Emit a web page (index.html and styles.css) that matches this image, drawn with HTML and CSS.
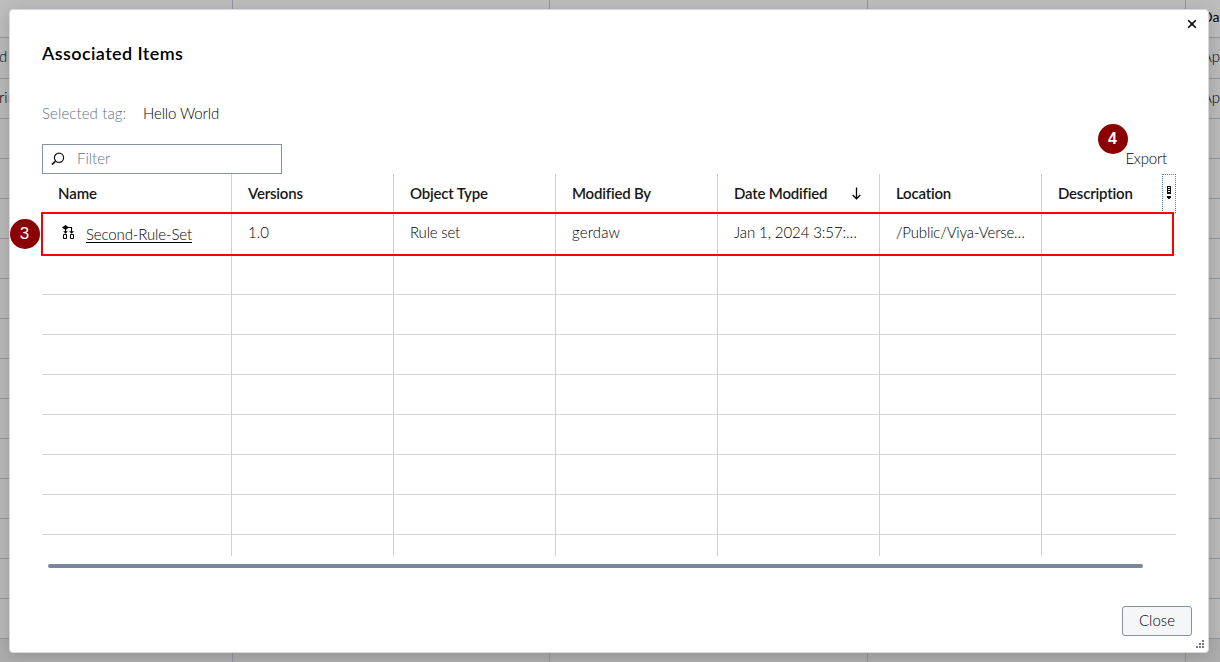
FILE: index.html
```html
<!DOCTYPE html>
<html lang="en">
<head>
<meta charset="utf-8">
<title>Associated Items</title>
<link rel="stylesheet" href="styles.css">
</head>
<body>
<div class="page">
  <div class="back-head"><span></span><span></span><span></span><span></span><b>Date</b></div>
  <div class="back-row first"><span class="l">d</span><span class="r">Apr</span></div>
  <div class="back-row"><span class="l">ring</span><span class="r">Apr</span></div>
  <div class="back-row"></div><div class="back-row"></div><div class="back-row"></div><div class="back-row"></div><div class="back-row"></div><div class="back-row"></div><div class="back-row"></div><div class="back-row"></div><div class="back-row"></div><div class="back-row"></div><div class="back-row"></div><div class="back-row"></div><div class="back-row"></div>
  <div class="back-foot"><span></span><span></span><span></span><span></span></div>
</div>
<section class="dialog">
  <svg class="x" width="10" height="10" viewBox="0 0 10 10"><path d="M1.2 1.2 8.8 8.8M8.8 1.2 1.2 8.8" stroke="#000" stroke-width="1.6"/></svg>
  <h1><span>Associated Items</span></h1>
  <div class="tag"><span class="label">Selected tag:</span><span class="value">Hello World</span></div>
  <div class="tools">
    <div class="filter">
      <svg width="14" height="14" viewBox="0 0 14 14"><circle cx="8" cy="5.8" r="4.6" fill="none" stroke="#111" stroke-width="1.2"/><path d="M4.6 9 1 12.6" stroke="#111" stroke-width="1.7"/></svg>
      <span>Filter</span>
    </div>
    <span class="export">Export</span>
  </div>
  <div class="table">
    <div class="row head">
      <div><span class="name">Name</span></div><div><span>Versions</span></div><div><span>Object Type</span></div><div><span>Modified By</span></div>
      <div><span>Date Modified</span><svg class="sort" width="9" height="13" viewBox="0 0 9 13"><path d="M4.5.5V11.500M.7 8 4.500 11.800 8.300 8" fill="none" stroke="#000" stroke-width="1.300"/></svg></div>
      <div><span>Location</span></div>
      <div><span>Description</span><span class="menu"><svg width="5" height="14" viewBox="0 0 5 14" shape-rendering="crispEdges"><path d="M0 0h4v8H0zM1 1v1h2V1zM1 3v1h2V3zM1 5v1h2V5z" fill="#111" fill-rule="evenodd"/><path d="M0 10h4v2H3v1H1v-1H0z" fill="#111"/></svg></span></div>
    </div>
    <div class="row data">
      <div><svg class="rule" width="13" height="14" viewBox="0 0 13 14"><path d="M0 2.500 3.500 0 7 2.500 3.500 5z"/><path d="M3 3h1.100v5H3zM6 2h4.100v6H9V3H6z"/><path d="M1.200 6.300h4.700L3.550 8.800zM7.200 6.300H12L9.550 8.800z"/><path d="M1.500 9.500h3v4h-3zM8.500 9.500h3v4h-3z" fill="#fff" stroke="#000"/></svg><a class="link">Second-Rule-Set</a></div>
      <div><span>1.0</span></div><div><span class="type">Rule set</span></div><div><span class="user">gerdaw</span></div><div><span class="date">Jan 1, 2024 3:57:…</span></div><div><span class="path">/Public/Viya-Verse…</span></div><div></div>
    </div>
    <div class="row"><div></div><div></div><div></div><div></div><div></div><div></div><div></div></div>
    <div class="row"><div></div><div></div><div></div><div></div><div></div><div></div><div></div></div>
    <div class="row"><div></div><div></div><div></div><div></div><div></div><div></div><div></div></div>
    <div class="row"><div></div><div></div><div></div><div></div><div></div><div></div><div></div></div>
    <div class="row"><div></div><div></div><div></div><div></div><div></div><div></div><div></div></div>
    <div class="row"><div></div><div></div><div></div><div></div><div></div><div></div><div></div></div>
    <div class="row"><div></div><div></div><div></div><div></div><div></div><div></div><div></div></div>
    <div class="row last"><div></div><div></div><div></div><div></div><div></div><div></div><div></div></div>
  </div>
  <div class="scroll"></div>
  <div class="actions"><button><span>Close</span></button></div>
  <svg class="grip" width="8" height="8" viewBox="0 0 8 8" shape-rendering="crispEdges"><path d="M6 0h2v2H6zM3 3h2v2H3zM6 3h2v2H6zM0 6h2v2H0zM3 6h2v2H3zM6 6h2v2H6z" fill="#6f7d92"/></svg>
</section>
<div class="highlight"></div>
<div class="badge three">3</div>
<div class="badge four">4</div>
</body>
</html>
```
FILE: styles.css
```css
* { box-sizing: border-box; }
body { margin: 0; width: 1220px; height: 662px; overflow: hidden; font: 300 15px/20px Lato, "Open Sans", sans-serif; color: #000; background: #b9b9b9; }
.page { height: 662px; overflow: hidden; background: #b9b9b9; }
.back-head, .back-foot { display: grid; grid-template-columns: 233px 317px 318px 318px 34px; height: 38px; border-bottom: 1px solid #92969d; background: #bdbdbd; }
.back-head span, .back-foot span { border-right: 1px solid #92969d; }
.back-head b { padding: 7px 0 0 16px; font-size: 14px; overflow: hidden; }
.back-row { display: flex; justify-content: space-between; height: 40px; padding-top: 8px; border-bottom: 1px solid #92969d; overflow: hidden; }
.back-row.first { height: 41px; }
.back-row .l { width: 24px; margin-left: -1px; }
.back-row .r { width: 18px; }
.back-foot { background: #adadad; border: 0; }
.dialog { position: absolute; left: 9px; top: 9px; width: 1200px; height: 644px; padding: 0 33px 0 32px; background: #fff; border: 1px solid #d5d8dc; border-radius: 4px; box-shadow: 0 3px 16px rgba(0,0,0,.16); }
.x { position: absolute; right: 11px; top: 9px; }
h1 { margin: 0; padding-top: 33px; font-size: 18px; line-height: 20px; font-weight: 600; letter-spacing: .4px; color: #000; }
.tag { display: flex; margin-top: 40px; height: 20px; }
.label { width: 101px; letter-spacing: .1px; color: #5f708b; }
.value { letter-spacing: -.12px; }
.tools { display: flex; justify-content: space-between; height: 30px; margin-top: 21px; }
.filter { display: flex; align-items: center; gap: 12px; width: 240px; padding-left: 8px; border: 1px solid #8490a4; color: #5f708b; }
.filter span { margin-top: -2px; }
.export { padding: 4px 8px 0 0; letter-spacing: -.2px; }
.table { width: 1134px; height: 382px; overflow: hidden; }
.row { display: grid; grid-template-columns: 190px repeat(5, 162px) 134px; height: 40px; }
.row > div { display: flex; padding: 8px 0 0 16px; border-right: 1px solid #ced0d4; border-bottom: 1px solid #d4d5d8; white-space: nowrap; }
.row > div:last-child { border-right: 0; }
.row.data { height: 41px; }
.row.last > div { border-bottom: 0; }
.row.head { font-weight: 600; letter-spacing: -.2px; color: #171717; }
.row.head > div { padding-top: 9px; }
.name { letter-spacing: -.1px; }
.head > div:nth-child(5), .head > div:nth-child(7) { justify-content: space-between; }
.sort { margin: 4px 18px 0 0; }
.menu { width: 14px; height: 39px; margin-top: -9px; padding: 11px 0 0 4px; border: 1px dotted #3483d1; line-height: 0; }
.rule { margin: 3px 11px 0 4px; }
.link { margin-top: 2px; letter-spacing: -.12px; text-decoration: underline; text-underline-offset: 2px; }
.type { letter-spacing: -.2px; }
.user { letter-spacing: .15px; }
.date { letter-spacing: -.1px; }
.path { letter-spacing: -.15px; }
.scroll { width: 1095px; height: 4px; margin: 8px 0 0 6px; border-radius: 2px; background: #77869a; }
.actions { display: flex; justify-content: flex-end; margin: 38px -17px 0 0; }
button { width: 70px; height: 30px; padding: 0 0 2px; font: inherit; color: inherit; background: #f5f6f8; border: 1px solid #8490a4; border-radius: 3px; }
.grip { position: absolute; right: 4px; bottom: 4px; }
.highlight { position: absolute; left: 41px; top: 212px; width: 1133px; height: 44px; border: 2px solid #f00; }
.badge { position: absolute; width: 30px; height: 30px; border-radius: 50%; background: #8b0000; color: #fff; font: 17px/30px "Liberation Sans", sans-serif; text-align: center; }
.three { left: 9.5px; top: 219px; }
.four { left: 1097.5px; top: 124px; font-size: 16px; font-weight: bold; }
```
